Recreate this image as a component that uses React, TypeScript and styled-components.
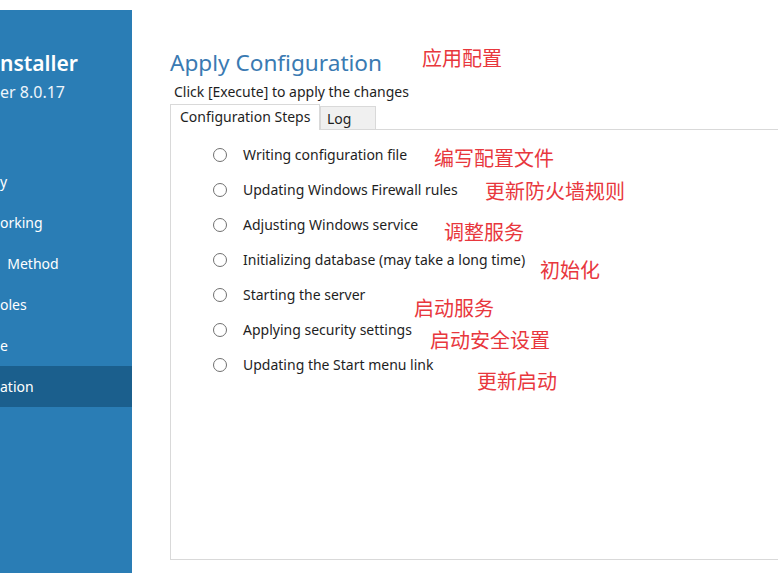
import styled, { createGlobalStyle } from "styled-components";

// Steps shown in the "Configuration Steps" tab
const steps = [
  "Writing configuration file",
  "Updating Windows Firewall rules",
  "Adjusting Windows service",
  "Initializing database (may take a long time)",
  "Starting the server",
  "Applying security settings",
  "Updating the Start menu link",
];

// sidebar items (cut off on the left in the screenshot)
const navItems = ["y", "orking", "  Method", "oles", "e", "ation"];

// red hand notes placed over the window
const notes = [
  { text: "应用配置", x: 422, y: 46 },
  { text: "编写配置文件", x: 434, y: 146 },
  { text: "更新防火墙规则", x: 485, y: 179 },
  { text: "调整服务", x: 444, y: 220 },
  { text: "初始化", x: 540, y: 258 },
  { text: "启动服务", x: 414, y: 296 },
  { text: "启动安全设置", x: 430, y: 328 },
  { text: "更新启动", x: 477, y: 369 },
];

export default function App() {
  return (
    <>
      <GlobalStyle />
      <Page>
        <Sidebar>
          <Brand>nstaller</Brand>
          <Version>er 8.0.17</Version>
          <Nav>
            {navItems.map((item, i) => (
              <NavItem key={item} $active={i === navItems.length - 1}>
                {item}
              </NavItem>
            ))}
          </Nav>
        </Sidebar>
        <Main>
          <Title>Apply Configuration</Title>
          <Hint>Click [Execute] to apply the changes</Hint>
          <Tabs>
            <Tab $active>Configuration Steps</Tab>
            <Tab>Log</Tab>
            <TabFill />
          </Tabs>
          <Panel>
            <StepList>
              {steps.map((s) => (
                <Step key={s}>
                  <Radio />
                  <span>{s}</span>
                </Step>
              ))}
            </StepList>
          </Panel>
        </Main>
        {notes.map((n) => (
          <Note key={n.text} style={{ left: n.x, top: n.y }}>
            {n.text}
          </Note>
        ))}
      </Page>
    </>
  );
}

const GlobalStyle = createGlobalStyle`
  html, body {
    margin: 0;
    padding: 0;
    background: #fff;
  }
  body {
    font-family: "Noto Sans", "Liberation Sans", sans-serif;
    color: #1e1e1e;
  }
`;

const Page = styled.div`
  position: relative;
  display: flex;
  width: 778px;
  height: 573px;
  overflow: hidden;
`;

const Sidebar = styled.aside`
  width: 132px;
  flex-shrink: 0;
  margin-top: 10px;
  background: #2a7db5;
  color: #fff;
  display: flex;
  flex-direction: column;
`;

const Brand = styled.div`
  margin-top: 38px;
  font-size: 21px;
  font-weight: 600;
  line-height: 30px;
  white-space: pre;
`;

const Version = styled.div`
  margin-top: 3px;
  font-size: 16px;
  line-height: 22px;
  white-space: pre;
  color: #eef5fb;
`;

const Nav = styled.div`
  margin-top: 58px;
  display: flex;
  flex-direction: column;
`;

const NavItem = styled.div<{ $active?: boolean }>`
  height: 41px;
  display: flex;
  align-items: center;
  font-size: 14px;
  white-space: pre;
  background: ${(p) => (p.$active ? "#1b5f8d" : "transparent")};
`;

const Main = styled.main`
  flex: 1;
  padding-left: 38px;
  display: flex;
  flex-direction: column;
`;

const Title = styled.h1`
  margin: 48px 0 0;
  font-size: 22.6px;
  font-weight: 400;
  line-height: 30px;
  color: #3a7ab2;
`;

const Hint = styled.div`
  margin: 5px 0 0 4px;
  font-size: 14px;
  line-height: 18px;
`;

const Tabs = styled.div`
  display: flex;
  align-items: flex-end;
  height: 26px;
  margin-top: 3px;
`;

const Tab = styled.div<{ $active?: boolean }>`
  box-sizing: border-box;
  height: ${(p) => (p.$active ? "26px" : "24px")};
  padding: ${(p) => (p.$active ? "2px 0 0 9px" : "2px 0 0 6px")};
  font-size: 14px;
  line-height: 20px;
  background: ${(p) => (p.$active ? "#fff" : "#f0f0f0")};
  border: 1px solid #d9d9d9;
  border-bottom: ${(p) => (p.$active ? "none" : "1px solid #d9d9d9")};
  width: ${(p) => (p.$active ? "150px" : "56px")};
  white-space: nowrap;
`;

const TabFill = styled.div`
  flex: 1;
  border-bottom: 1px solid #d9d9d9;
`;

const Panel = styled.div`
  width: 640px;
  height: 430px;
  box-sizing: border-box;
  border: 1px solid #d9d9d9;
  border-top: none;
`;

const StepList = styled.ul`
  list-style: none;
  margin: 0;
  padding: 7px 0 0 42px;
`;

const Step = styled.li`
  height: 35px;
  display: flex;
  align-items: center;
  gap: 16px;
  font-size: 14px;
`;

const Radio = styled.span`
  box-sizing: border-box;
  width: 14px;
  height: 14px;
  border: 1.6px solid #707070;
  border-radius: 50%;
  flex-shrink: 0;
`;

const Note = styled.div`
  position: absolute;
  font-family: "Noto Sans CJK SC", sans-serif;
  font-size: 20px;
  line-height: 24px;
  color: #e8373d;
  white-space: nowrap;
`;
